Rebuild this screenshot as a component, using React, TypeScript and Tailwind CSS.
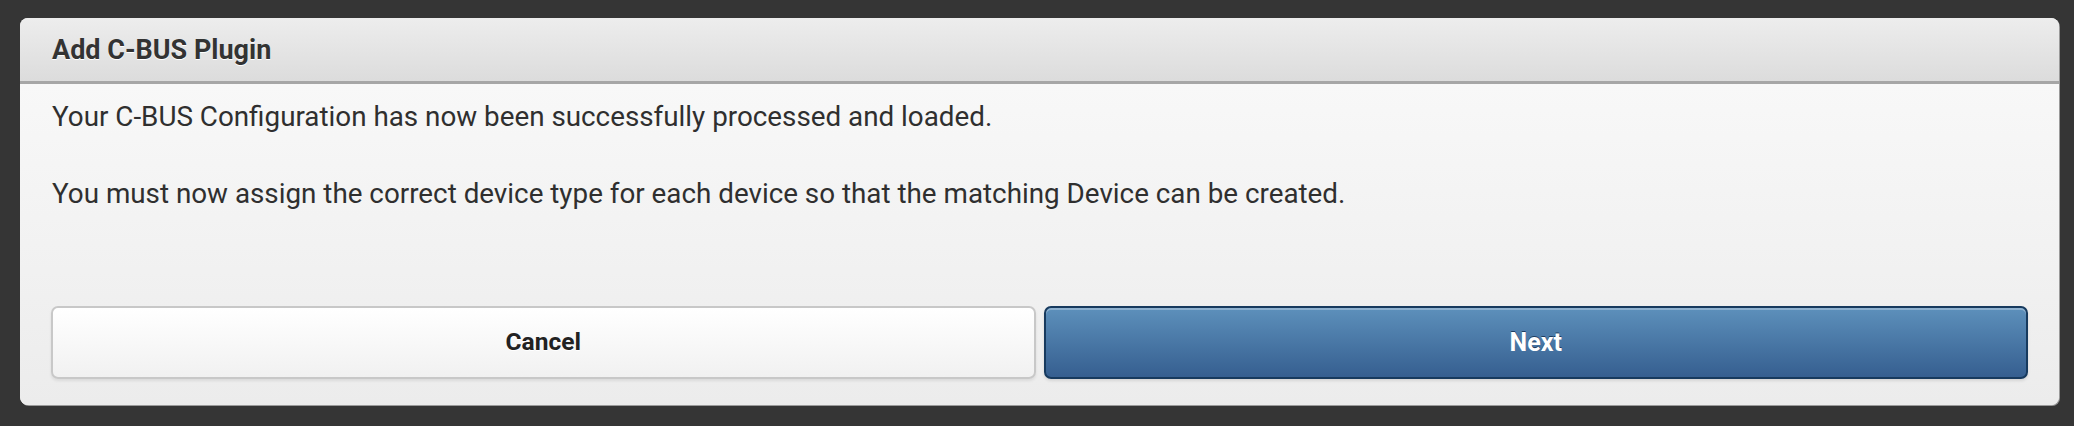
export default function App() {
    return (
        <div className="w-[2074px] h-[426px] bg-[#353535] pl-[20px] pt-[18px] pr-[15px] pb-[21px] flex" style={{ fontFamily: "Roboto, 'Liberation Sans', sans-serif" }}>
            <div className="flex-1 flex flex-col rounded-[8px] overflow-hidden bg-[#efefef] shadow-[1px_1px_0_#9a9a9a]">
                <div className="h-[66px] shrink-0 bg-gradient-to-b from-[#ededed] to-[#dcdcdc] border-b-[3px] border-[#a6a6a6] pl-[32px] flex items-center">
                    <span className="text-[27px] font-bold text-[#333] [text-shadow:0_1px_0_#fff] pt-[2px]">Add C-BUS Plugin</span>
                </div>
                <div className="flex-1 flex flex-col bg-gradient-to-b from-[#f8f8f8] to-[#ececec] px-[31px] pt-[14px]">
                    <div className="text-[27.8px] leading-[38.5px] text-[#2f2f2f] pl-[1px]">
                        <p>Your C-BUS Configuration has now been successfully processed and loaded.</p>
                        <p className="mt-[38.5px]">You must now assign the correct device type for each device so that the matching Device can be created.</p>
                    </div>
                    <div className="mt-auto mb-[26px] flex gap-[8px]">
                        <button className="flex-1 h-[73px] rounded-[7px] border-2 border-[#c8c8c8] bg-gradient-to-b from-[#ffffff] to-[#f1f1f1] shadow-[0_2px_3px_rgba(0,0,0,0.08)] text-[24.5px] font-bold text-[#222] [text-shadow:0_1px_0_#fff]">
                            Cancel
                        </button>
                        <button className="flex-1 h-[73px] rounded-[7px] border-2 border-[#173a5e] bg-gradient-to-b from-[#5d90bb] to-[#365f90] shadow-[inset_0_2px_0_rgba(255,255,255,0.3),0_2px_3px_rgba(0,0,0,0.1)] text-[25px] font-bold text-white [text-shadow:0_-1px_0_#1c3c60]">
                            Next
                        </button>
                    </div>
                </div>
            </div>
        </div>
    )
}
